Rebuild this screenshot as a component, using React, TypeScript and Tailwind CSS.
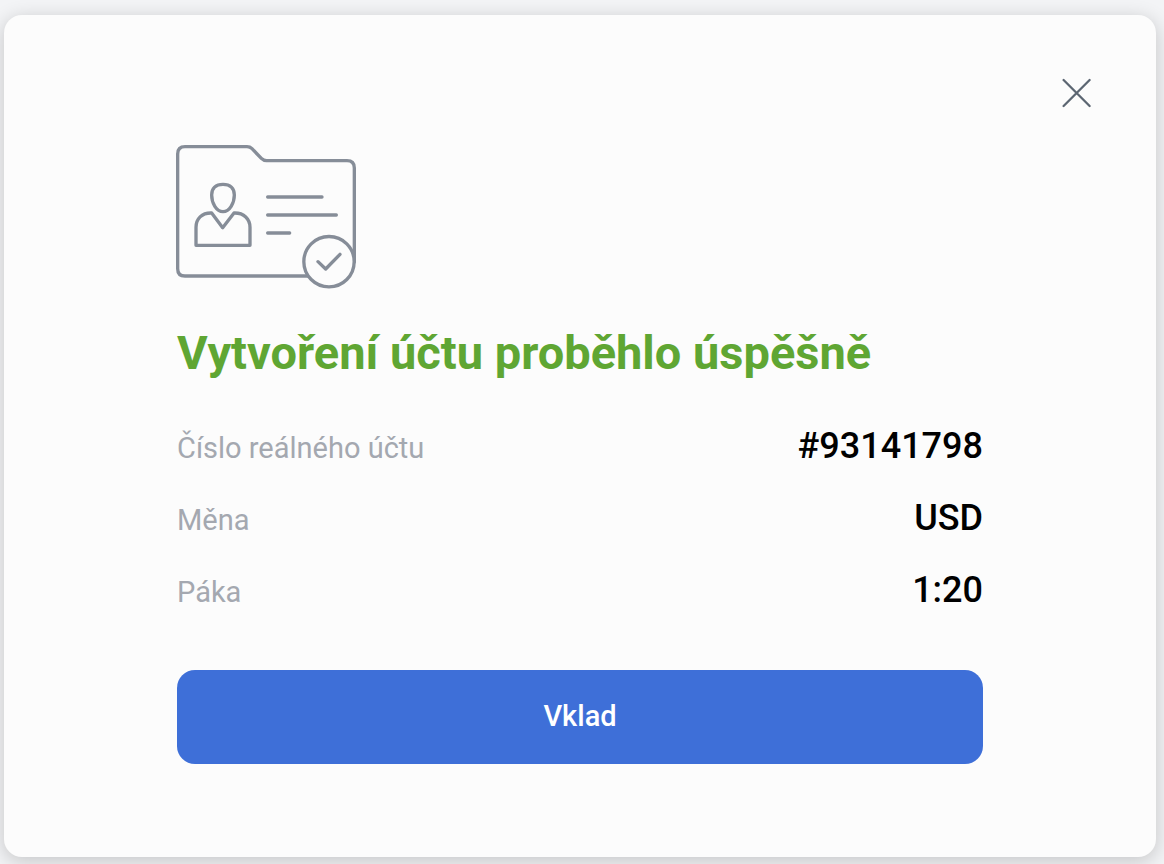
import { useState } from 'react'

interface AccountDetail {
  label: string
  value: string
}

const details: AccountDetail[] = [
  { label: 'Číslo reálného účtu', value: '#93141798' },
  { label: 'Měna', value: 'USD' },
  { label: 'Páka', value: '1:20' }
]

function AccountFolderIcon() {
  return (
    <svg
      width="180"
      height="146"
      viewBox="33 27 540 438"
      fill="none"
      stroke="#868d98"
      strokeWidth="10"
      strokeLinecap="round"
      strokeLinejoin="round"
      className="overflow-visible"
      aria-hidden="true"
    >
      {/* Folder */}
      <path d="M424 420H57q-22 0-22-22V54q0-22 22-22H243q9 0 15 6L286 67q7 7 16 7H543q22 0 22 22V378" />
      {/* Person */}
      <path d="M171 145C193 145 205 157 205 177C205 201 191 227 171 227S137 201 137 177C137 157 149 145 171 145Z" />
      <path d="M137 231C107 230 90 249 90 274V328H252V274C252 249 234 230 204 231L170 275Z" />
      {/* Text lines */}
      <path d="M305 183H468M305 237H511M305 291H371" />
      {/* Check badge */}
      <circle cx="489" cy="377" r="75.500" fill="#fcfcfc" />
      <path d="M456 377L479 399L522 355" />
    </svg>
  )
}

export default function App() {
  const [open, setOpen] = useState(true)

  return (
    <div className="min-h-screen bg-[#f3f4f6] pt-[15px] pr-2 pb-[7px] pl-1 font-[Roboto,sans-serif]">
      {open && (
        <section
          role="dialog"
          aria-labelledby="dialog-title"
          className="rounded-[18px] bg-[#fcfcfc] px-16 pt-[62px] pb-[93px] shadow-[0_4px_20px_rgba(0,0,0,0.2)]"
        >
          <div className="flex justify-end">
            <button
              type="button"
              aria-label="Zavřít"
              onClick={() => setOpen(false)}
              className="flex size-8 cursor-pointer items-center justify-center"
            >
              <svg width="30" height="30" viewBox="0 0 30 30" stroke="#5c6672" strokeWidth="2.300" strokeLinecap="round" aria-hidden="true">
                <path d="m2.600 2 26 26M28.600 2l-26 26" />
              </svg>
            </button>
          </div>

          <div className="mx-[109px] pt-9">
            <AccountFolderIcon />
            <h1 id="dialog-title" className="mt-8 text-[47px] leading-[60px] font-bold text-[#5fa633]">
              Vytvoření účtu proběhlo úspěšně
            </h1>

            <dl className="mt-[27px]">
              {details.map((detail) => (
                <div key={detail.label} className="flex items-baseline justify-between">
                  <dt className="text-[29px] leading-none text-[#a4a8b0]">{detail.label}</dt>
                  <dd className="text-[36px] leading-[72px] font-medium text-black">{detail.value}</dd>
                </div>
              ))}
            </dl>

            <button
              type="button"
              className="mt-11 h-[94px] w-full cursor-pointer rounded-[18px] bg-[#3e6fd8] text-[29px] font-medium text-white"
            >
              Vklad
            </button>
          </div>
        </section>
      )}
    </div>
  )
}
